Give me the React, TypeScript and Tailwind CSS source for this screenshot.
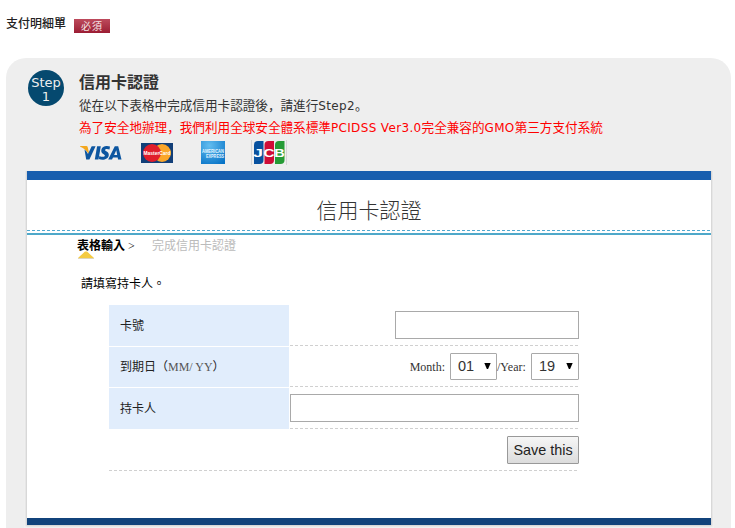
import React from 'react';

const jp = "font-['Noto_Sans','Noto_Sans_CJK_JP',sans-serif]";
const tc = "font-['Liberation_Serif','Noto_Sans_CJK_TC',sans-serif]";

function DashedLine() {
    return <div className="h-px w-full shrink-0 bg-[repeating-linear-gradient(90deg,#d0d0d0_0,#d0d0d0_3px,transparent_3px,transparent_5px)]" />;
}

function Latin({ children }: { children: React.ReactNode }) {
    return <span className="font-['DejaVu_Sans',sans-serif] text-[12px] tracking-[0.35px]">{children}</span>;
}

function VisaLogo() {
    return (
        <svg width="42" height="16" viewBox="0 0 42 16">
            <path d="M0 1H6.2Q7.5 1 7.8 2.4L9.5 10Q6 4 0 1.4Z" fill="#f4a71d" />
            <path d="M4.5 4.5Q6.8 6 8 9L11.7 1.3H15.6L9.4 14.6H6.2Z" fill="#0d56a0" />
            <path d="M17.1 1.3H20.8L18.5 14.6H14.8Z" fill="#0d56a0" />
            <path d="M30 1.6L29.5 4.6C27.7 3.8 25.3 3.7 25.1 4.9C25 6.3 29.2 6.5 28.8 10C28.4 14.7 22.4 15.6 18.8 14L19.4 10.9C21.3 12 24.5 12.4 24.9 10.8C25.1 9.2 20.8 8.9 21.3 5.3C21.8 1 27 .3 30 1.6Z" fill="#0d56a0" />
            <path fillRule="evenodd" d="M34.8 1.3H38.2L41.5 14.6H38L37.7 12.6H33L32 14.6H28.2ZM36.3 5.3L34.1 10H37.2Z" fill="#0d56a0" />
        </svg>
    );
}

function MasterCardLogo() {
    return (
        <svg width="32" height="20" viewBox="0 0 32 20">
            <rect width="32" height="20" fill="#123f78" />
            <circle cx="21" cy="10" r="9" fill="#faa62a" />
            <circle cx="11" cy="10" r="9" fill="#e01d2b" />
            <text x="16" y="12.3" textAnchor="middle" fontSize="6" fontWeight="bold" textLength="27" lengthAdjust="spacingAndGlyphs" fill="#fff" fontFamily="Liberation Sans">MasterCard</text>
        </svg>
    );
}

function AmexLogo() {
    return (
        <svg width="24" height="23" viewBox="0 0 24 23">
            <defs>
                <radialGradient id="amex" cx="0.35" cy="0.2" r="0.95">
                    <stop offset="0" stopColor="#62bdf0" />
                    <stop offset="1" stopColor="#0672c6" />
                </radialGradient>
            </defs>
            <rect width="24" height="23" fill="url(#amex)" />
            <text x="1" y="11.5" fontSize="4.6" fontWeight="bold" textLength="22" lengthAdjust="spacingAndGlyphs" fill="#e6f5ff" fontFamily="Liberation Sans">AMERICAN</text>
            <text x="5" y="16.5" fontSize="4.6" fontWeight="bold" textLength="18" lengthAdjust="spacingAndGlyphs" fill="#e6f5ff" fontFamily="Liberation Sans">EXPRESS</text>
        </svg>
    );
}

function JcbLogo() {
    return (
        <svg width="36" height="25" viewBox="0 0 36 25">
            <rect x="0" width="1" height="25" fill="#d4d4d4" />
            <rect x="35" width="1" height="25" fill="#d4d4d4" />
            <path d="M7 1H12.5V20Q12.5 24 8.5 24H3V5Q3 1 7 1Z" fill="#07519f" />
            <path d="M17.5 1H23V20Q23 24 19 24H13.5V5Q13.5 1 17.5 1Z" fill="#cf0c37" />
            <path d="M28 1H33.5V20Q33.5 24 29.5 24H24V5Q24 1 28 1Z" fill="#259b35" />
            <g fontSize="11.5" fontWeight="bold" fill="#fff" fontFamily="Liberation Sans">
                <text x="2" y="16.5" textLength="10" lengthAdjust="spacingAndGlyphs">J</text>
                <text x="12.6" y="16.5" textLength="11" lengthAdjust="spacingAndGlyphs">C</text>
                <text x="23.3" y="16.5" textLength="10.5" lengthAdjust="spacingAndGlyphs">B</text>
            </g>
        </svg>
    );
}

function SelectBox({ value, className }: { value: string; className: string }) {
    return (
        <div className={`flex h-[27px] items-center justify-between rounded-[1px] border border-[#a9a9a9] bg-white pl-[7px] pr-[5px] font-['Liberation_Sans',sans-serif] text-[#333] ${className}`}>
            <span className="text-[14.5px]">{value}</span>
            <svg className="mb-[2px]" width="7" height="6" viewBox="0 0 7 6">
                <path d="M0.3 0H6.7L4.1 6H2.9Z" fill="#000" />
            </svg>
        </div>
    );
}

function FormRow({ label, className, children }: { label: React.ReactNode; className: string; children: React.ReactNode }) {
    return (
        <div className={`flex gap-px ${className}`}>
            <div className={`flex w-[180px] shrink-0 items-center bg-[#e1edfc] pl-[11px] text-[12px] text-[#222] ${tc}`}>{label}</div>
            <div className="flex w-[289px] flex-col">
                <div className="flex flex-1 items-center justify-end">{children}</div>
                <DashedLine />
            </div>
        </div>
    );
}

export default function App() {
    return (
        <div className={`h-[528px] w-[735px] overflow-hidden bg-white text-[#333] ${jp}`}>
            <header className="flex h-[58px] items-start pl-[6px]">
                <h1 className="mt-[14px] w-[68px] whitespace-nowrap text-[12px] font-medium leading-[20px] text-[#222]">支付明細單</h1>
                <span className="mt-[19px] flex h-[14px] w-[36px] items-center justify-center bg-linear-to-b from-[#bd4a5c] to-[#9b1c34] text-[10px] leading-none tracking-[1px] text-[#f5e4e7]">必須</span>
            </header>

            <main className="ml-[6px] h-[490px] w-[725px] rounded-t-[20px] bg-[#eee] pt-[12px]">
                <section className="flex h-[101px] pl-[22px]">
                    <div className="flex size-[36px] shrink-0 flex-col items-center justify-center rounded-full bg-[#05496f] pt-[4px] font-['DejaVu_Sans',sans-serif] text-[13px] leading-[14px] text-[#eee]">
                        <span>Step</span>
                        <span>1</span>
                    </div>
                    <div className="ml-[15px] whitespace-nowrap">
                        <h2 className="h-[25px] text-[16px] font-bold leading-[24px]">信用卡認證</h2>
                        <p className="h-[22px] text-[12.6px] leading-[22px]">從在以下表格中完成信用卡認證後，請進行<Latin>Step2</Latin>。</p>
                        <p className="h-[22px] text-[12.6px] leading-[22px] text-[#f00]">為了安全地辦理，我們利用全球安全體系標準<Latin>PCIDSS Ver3.0</Latin>完全兼容的<Latin>GMO</Latin>第三方支付系統</p>
                        <div className="flex h-[27px] items-center pl-px">
                            <VisaLogo />
                            <div className="ml-[19px]"><MasterCardLogo /></div>
                            <div className="ml-[28px]"><AmexLogo /></div>
                            <div className="ml-[26px]"><JcbLogo /></div>
                        </div>
                    </div>
                </section>

                <section className="ml-[21px] flex h-[354px] w-[684px] flex-col bg-white shadow-[0_0_2px_1px_#ccc,0_0_0_3px_#f2f2f2] [clip-path:inset(0_-4px_-4px_-4px)]">
                    <div className="h-[9px] bg-[#185eae]" />
                    <h2 className="h-[50px] pt-[14px] text-center font-['Noto_Sans_CJK_TC',sans-serif] text-[21px] font-light leading-[30px]">信用卡認證</h2>
                    <div className="h-px bg-[repeating-linear-gradient(90deg,#4fa8d0_0,#4fa8d0_3px,transparent_3px,transparent_5px)]" />
                    <div className="mt-[2px] h-[2px] bg-[#4fa8c9]" />

                    <div className={`flex h-[32px] pl-[50px] text-[12px] leading-[22px] ${tc}`}>
                        <div className="w-[75px]">
                            <p className="h-[16px] whitespace-nowrap text-black"><span className="font-bold">表格輸入</span> &gt;</p>
                            <svg className="ml-px" width="16" height="8" viewBox="0 0 16 8">
                                <path d="M0 7L7 0.5H9L16 7Z" fill="#f4cb42" />
                                <path d="M0 7.5H16" stroke="#dfd6bb" />
                            </svg>
                        </div>
                        <p className="text-[#bbb]">完成信用卡認證</p>
                    </div>
                    <p className={`h-[38px] pl-[54px] pt-[7px] text-[12px] leading-[20px] text-black ${tc}`}>請填寫持卡人。</p>

                    <form className="ml-[82px] w-[470px]">
                        <FormRow label="卡號" className="h-[41px]">
                            <input aria-label="卡號" className="h-[28px] w-[184px] border border-[#a9a9a9] bg-white" />
                        </FormRow>
                        <FormRow label={<span>到期日（<span className="text-[#555]">MM/ YY</span>）</span>} className="mt-px h-[40px]">
                            <span className={`mr-[5px] text-[12px] ${tc}`}>Month:</span>
                            <SelectBox value="01" className="w-[47px]" />
                            <span className={`w-[34px] whitespace-nowrap text-[12px] ${tc}`}>/Year:</span>
                            <SelectBox value="19" className="w-[48px]" />
                        </FormRow>
                        <FormRow label="持卡人" className="mt-px h-[41px]">
                            <input aria-label="持卡人" className="h-[28px] w-[289px] border border-[#a9a9a9] bg-white" />
                        </FormRow>
                        <div className="flex h-[41px] items-center justify-end">
                            <button type="button" className="h-[28px] w-[72px] whitespace-nowrap rounded-[1px] border border-[#999] bg-linear-to-b from-[#f6f6f6] to-[#dcdcdc] pt-[2px] font-['Liberation_Sans',sans-serif] text-[14.4px] text-[#222]">Save this</button>
                        </div>
                        <DashedLine />
                    </form>

                    <div className="mt-auto h-[7px] bg-[#11437b]" />
                </section>
            </main>
        </div>
    );
}
